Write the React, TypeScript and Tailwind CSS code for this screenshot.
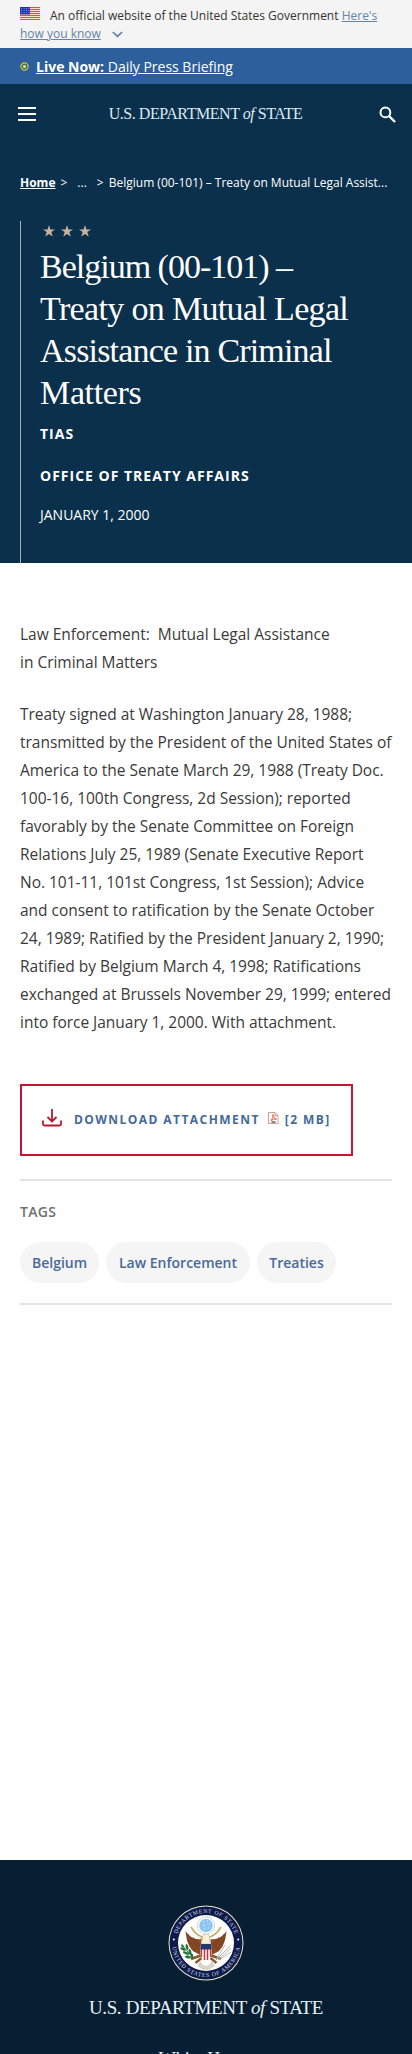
import React from "react";

const Star = () => (
  <svg width="12" height="12" viewBox="0 0 24 24" fill="#c9b29d">
    <path d="M12 0l2.900 8.800H24l-7.400 5.400 2.900 9L12 17.800 4.500 23.200l2.900-9L0 8.800h9.100z" />
  </svg>
);

const Flag = () => (
  <svg width="20" height="13" viewBox="0 0 20 13" className="shrink-0">
    <rect width="20" height="13" fill="#fff" />
    {[0, 2, 4, 6, 8, 10, 12].map((y) => (
      <rect key={y} y={y} width="20" height="1.200" fill="#e2553a" />
    ))}
    <rect width="10" height="7.500" fill="#1e33b1" />
    {[1.300, 3.300, 5.300].map((y) =>
      [1.200, 3.700, 6.200, 8.400].map((x) => (
        <rect key={`${x}-${y}`} x={x} y={y} width="0.900" height="0.900" fill="#a9b4e6" />
      ))
    )}
  </svg>
);

const Seal = () => (
  <svg width="76" height="76" viewBox="0 0 76 76" className="shrink-0">
    <defs>
      <path id="ringTop" d="M8 38a30 30 0 0 1 60 0" />
      <path id="ringBottom" d="M4 38a34 34 0 0 0 68 0" />
    </defs>
    <circle cx="38" cy="38" r="37.500" fill="#e9e6c4" />
    <circle cx="38" cy="38" r="36.500" fill="#0e1a4a" />
    <circle cx="38" cy="38" r="28" fill="#fff" />
    <g fontFamily="Liberation Serif" fontSize="5.800" fill="#d5daea">
      <text textLength="76" lengthAdjust="spacing">
        <textPath href="#ringTop" startOffset="9">DEPARTMENT OF STATE</textPath>
      </text>
      <text textLength="98" lengthAdjust="spacing">
        <textPath href="#ringBottom" startOffset="4">UNITED STATES OF AMERICA</textPath>
      </text>
    </g>
    <circle cx="5.800" cy="34.500" r="1" fill="#fff" />
    <circle cx="70.200" cy="34.500" r="1" fill="#fff" />
    <circle cx="38" cy="20.500" r="8.500" fill="#fff" stroke="#a7b3b5" strokeWidth="1" strokeDasharray="1 .7" />
    <circle cx="38" cy="20.500" r="6.800" fill="#8cc5f2" />
    <path d="M35 17h1m3-1h1m1 3h1m-6 2h1m3 2h1m-5 1h1m-2-4h1" stroke="#e6f3fc" strokeWidth="1" />
    <path d="M23 22q6 10 14 10.500M53 22q-6 10-14 10.500" fill="none" stroke="#c2a763" strokeWidth="1.500" />
    <path d="M17.500 26c1 11 4 17 8 20.500l7 3.500 1-16c-7 1-12-2-16-8zM58.500 26c-1 11-4 17-8 20.500l-7 3.500-1-16c7 1 12-2 16-8z" fill="#8a4a26" />
    <path d="M20 29l11 15M19 33l9 12M25 32l7 9M56 29L45 44M57 33l-9 12M51 32l-7 9" stroke="#5f2d16" strokeWidth=".6" />
    <path d="M33.500 53l-6 5M42.500 53l6 5M34 50l-11 4M42 50l11 4" stroke="#8a5a2c" strokeWidth="2.500" />
    <path d="M33.500 39l1-6c-.5-2 1-4 3.500-4s4 1.500 3.500 4l1 6z" fill="#f5f0dc" stroke="#b9a57b" strokeWidth=".5" />
    <path d="M34.500 32l-2.500 1.500 2.500 1z" fill="#d9a62b" />
    <path d="M32 57q6 9 12 0l2 4q-8 7-16 0z" fill="#d9d6cb" stroke="#b5b2a6" strokeWidth=".5" />
    <path d="M32.500 39h11v12q-1 3-5.500 5-4.500-2-5.500-5z" fill="#fff" />
    <path d="M33.400 44v8M36.500 44v11M39.500 44v11M42.600 44v8" stroke="#c23a3a" strokeWidth="1.500" />
    <path d="M32.500 39h11v5.500h-11z" fill="#24376f" />
    <path d="M14 40l12 14" stroke="#2f6b35" strokeWidth=".9" />
    <g fill="#26713a">
      <ellipse cx="15" cy="44" rx="3" ry="1.300" transform="rotate(25 15 44)" />
      <ellipse cx="18" cy="48" rx="3.300" ry="1.400" transform="rotate(20 18 48)" />
      <ellipse cx="20" cy="52" rx="3" ry="1.400" transform="rotate(10 20 52)" />
      <ellipse cx="19" cy="42" rx="3" ry="1.300" transform="rotate(75 19 42)" />
      <ellipse cx="22" cy="47" rx="3" ry="1.400" transform="rotate(75 22 47)" />
      <ellipse cx="24" cy="51" rx="2.500" ry="1.200" transform="rotate(80 24 51)" />
      <ellipse cx="14.500" cy="41" rx="2" ry="1" transform="rotate(50 14.500 41)" />
    </g>
    <path d="M48 55L62 41M49 53l8-13M51 55l12-8M50 55l13-12" stroke="#b9b8ab" strokeWidth="1" />
  </svg>
);

const bodyLines = [
  "Treaty signed at Washington January 28, 1988;",
  "transmitted by the President of the United States of",
  "America to the Senate March 29, 1988 (Treaty Doc.",
  "100-16, 100th Congress, 2d Session); reported",
  "favorably by the Senate Committee on Foreign",
  "Relations July 25, 1989 (Senate Executive Report",
  "No. 101-11, 101st Congress, 1st Session); Advice",
  "and consent to ratification by the Senate October",
  "24, 1989; Ratified by the President January 2, 1990;",
  "Ratified by Belgium March 4, 1998; Ratifications",
  "exchanged at Brussels November 29, 1999; entered",
  "into force January 1, 2000. With attachment.",
];

export default function App() {
  return (
    <div className="flex h-[2054px] w-[412px] flex-col overflow-hidden bg-white font-['Open_Sans',sans-serif] text-[#333]">
      <div className="h-12 bg-[#f4f4f4] px-5 pt-[7px] text-[12px] leading-[18px] whitespace-nowrap">
        <div className="flex">
          <Flag />
          <span className="ml-[10px]">
            An official website of the United States Government{" "}
            <a className="text-[#6583ab] underline">Here's</a>
          </span>
        </div>
        <div className="flex items-center">
          <a className="text-[#6583ab] underline">how you know</a>
          <svg className="ml-[11px]" width="11" height="7" viewBox="0 0 11 7" fill="none" stroke="#5a7fa8" strokeWidth="1.600">
            <path d="M.8 1l4.700 4.300L10.200 1" />
          </svg>
        </div>
      </div>

      <div className="flex h-9 items-center bg-[#2c5f9b] px-5 text-[14px] text-white">
        <svg width="9" height="9" viewBox="0 0 9 9">
          <circle cx="4.500" cy="4.500" r="3.600" fill="#3c6c6d" stroke="#c6c53c" strokeWidth="1.200" />
          <circle cx="4.500" cy="4.500" r="1.500" fill="#f0ef9c" />
        </svg>
        <a className="ml-[7px] whitespace-nowrap underline">
          <b>Live Now:</b> Daily Press Briefing
        </a>
      </div>

      <header className="h-[479px] bg-[#0b304c] text-white">
        <div className="flex h-[60px] items-center justify-between pr-[16px] pl-[18px]">
          <div className="flex w-[18px] flex-col gap-1">
            <i className="h-[2px] bg-white" />
            <i className="h-[2px] bg-white" />
            <i className="h-[2px] bg-white" />
          </div>
          <div className="ml-[-4px] font-['Liberation_Serif',serif] text-[16px] tracking-[-0.45px] whitespace-nowrap text-[#dcebf5]">
            U.S. DEPARTMENT <i>of</i> STATE
          </div>
          <svg width="17" height="17" viewBox="0 0 17 17" fill="none" stroke="#fff" strokeWidth="2">
            <circle cx="6.400" cy="6.400" r="4.900" />
            <path d="M10 10l6 6" strokeWidth="2.400" />
          </svg>
        </div>
        <div className="mt-[30px] flex h-[18px] items-center pl-5 text-[12px] leading-[18px] whitespace-nowrap">
          <b className="underline">Home</b>
          <span className="ml-[5px]">&gt;</span>
          <span className="ml-[10px]">...</span>
          <span className="ml-[10px]">&gt;</span>
          <span className="ml-[5px]">Belgium (00-101) – Treaty on Mutual Legal Assist...</span>
        </div>
        <div className="mt-[29px] ml-5 h-[342px] border-l border-[#a9b3b4] pl-[19px]">
          <div className="flex gap-[6px] pt-[4px] pl-[3px]">
            <Star />
            <Star />
            <Star />
          </div>
          <h1 className="mt-[9px] font-['Liberation_Serif',serif] text-[34px] leading-[42px] whitespace-nowrap">
            <span className="block tracking-[-1px]">Belgium (00-101) –</span>
            <span className="block tracking-[-0.660px]">Treaty on Mutual Legal</span>
            <span className="block tracking-[-0.820px]">Assistance in Criminal</span>
            <span className="block tracking-[-0.35px]">Matters</span>
          </h1>
          <div className="mt-[10px] text-[14px] leading-[20px] font-bold tracking-[1px]">TIAS</div>
          <div className="mt-[22px] text-[14px] leading-[20px] font-bold tracking-[1px]">OFFICE OF TREATY AFFAIRS</div>
          <div className="mt-[19px] text-[14px] leading-[20px]">JANUARY 1, 2000</div>
        </div>
      </header>

      <main className="h-[1297px] px-5 pt-[57px]">
        <div className="text-[15.500px] leading-[28px] tracking-[-0.020px] whitespace-pre text-[#3a3a3a]">
          <p>
            {"Law Enforcement:  Mutual Legal Assistance"}
            <br />
            in Criminal Matters
          </p>
          <p className="mt-[24px]">
            {bodyLines.map((line) => (
              <span key={line} className="block">{line}</span>
            ))}
          </p>
        </div>
        <div className="mt-[48px] flex h-[72px] w-[333px] items-center border-2 border-[#c5142f] pl-[20px] text-[12px] font-bold text-[#44699a]">
          <svg className="mt-[-5px]" width="20" height="18" viewBox="0 0 20 18" fill="none" stroke="#b8182f" strokeWidth="1.800">
            <path d="M10 0v12M5.500 8l4.500 4.500L14.500 8M1 11.500V15q0 1.500 1.500 1.500h15q1.500 0 1.500-1.500v-3.500" />
          </svg>
          <span className="ml-[12px] tracking-[1.440px] whitespace-nowrap">DOWNLOAD ATTACHMENT</span>
          <svg className="mt-[-5px] ml-[8px]" width="11" height="12" viewBox="0 0 11 12" fill="none" stroke="#dd8f83" strokeWidth=".9">
            <path d="M.5.500h6.500l3 3V11.500H.500zM7 .5v3h3" />
            <path d="M3 8.500Q5.500 6 5 2.500 5.500 6.500 8.500 7 5 7 3 8.500z" stroke="#cf5548" />
            <path d="M3.500 10h4" stroke="#555" strokeWidth="1.400" />
          </svg>
          <span className="ml-[6px] tracking-[1.440px] whitespace-nowrap">[2 MB]</span>
        </div>
        <div className="mt-[23px] h-[126px] border-y-2 border-[#e4e4e4] pt-[19px]">
          <div className="text-[14px] leading-[24px] font-semibold tracking-[0.300px] text-[#707070]">TAGS</div>
          <div className="mt-[18px] flex gap-[7px] text-[14px] font-semibold whitespace-nowrap text-[#48699a]">
            <a className="flex h-[41px] w-[79px] items-center justify-center rounded-full bg-[#f5f5f5]">Belgium</a>
            <a className="flex h-[41px] w-[144px] items-center justify-center rounded-full bg-[#f5f5f5]">Law Enforcement</a>
            <a className="flex h-[41px] w-[79px] items-center justify-center rounded-full bg-[#f5f5f5]">Treaties</a>
          </div>
        </div>
      </main>

      <footer className="flex h-[194px] flex-col items-center overflow-hidden bg-[#081f33] pt-[45px] text-[#e4f1f8]">
        <Seal />
        <div className="mt-[15px] shrink-0 font-['Liberation_Serif',serif] text-[19px] leading-[24px] tracking-[-0.360px] whitespace-nowrap">
          U.S. DEPARTMENT <i>of</i> STATE
        </div>
        <div className="mt-[27px] shrink-0 font-['Liberation_Serif',serif] text-[18px] leading-[24px] whitespace-nowrap">White House</div>
      </footer>
    </div>
  );
}
